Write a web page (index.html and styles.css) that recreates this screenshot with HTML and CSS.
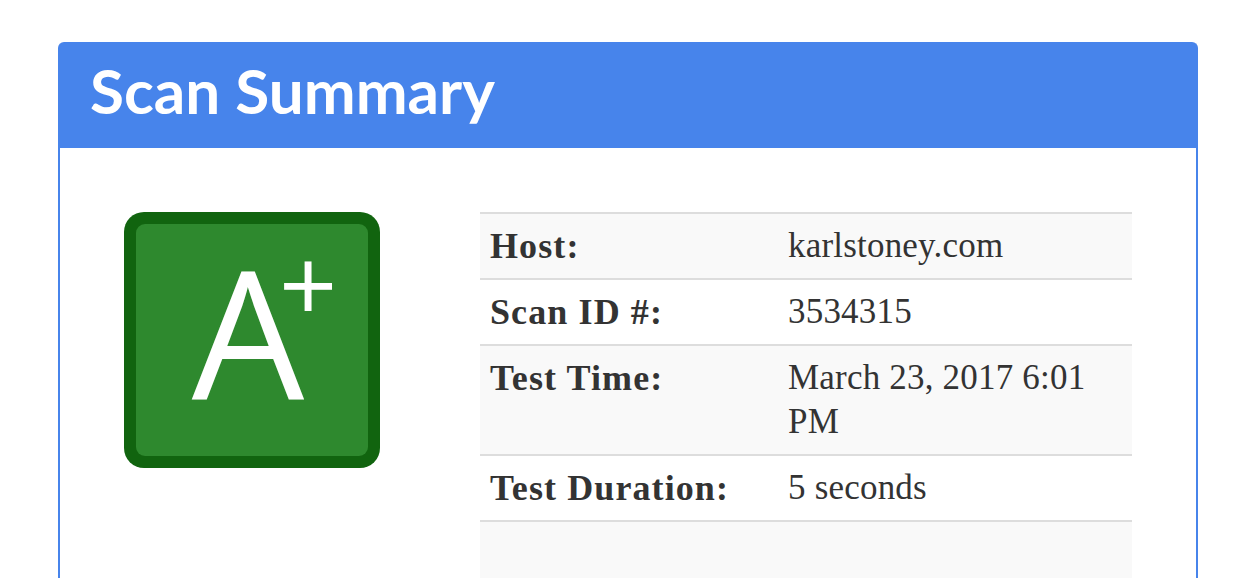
FILE: index.html
```html
<!DOCTYPE html>
<html lang="en">
<head>
<meta charset="utf-8">
<title>Scan Summary</title>
<link rel="stylesheet" href="styles.css">
</head>
<body>
<section class="panel">
  <header class="panel-heading">
    <h1 class="panel-title">Scan Summary</h1>
  </header>
  <div class="panel-body">
    <div class="grade">
      <div class="grade-inner">
        <span class="grade-letter">A</span>
        <span class="grade-mod">+</span>
      </div>
    </div>
    <table class="summary">
      <colgroup>
        <col class="col-label">
        <col class="col-value">
      </colgroup>
      <tbody>
        <tr><th>Host:</th><td>karlstoney.com</td></tr>
        <tr><th>Scan ID #:</th><td>3534315</td></tr>
        <tr><th>Test Time:</th><td>March 23, 2017 6:01 PM</td></tr>
        <tr><th>Test Duration:</th><td>5 seconds</td></tr>
        <tr class="empty"><th>&nbsp;</th><td>&nbsp;</td></tr>
      </tbody>
    </table>
  </div>
</section>
</body>
</html>
```

FILE: styles.css
```css
html, body {
  margin: 0;
  padding: 0;
  background: #ffffff;
  overflow: hidden;
}

body {
  height: 578px;
}

.panel {
  margin: 42px 44px 0 58px;
  border: 2px solid #4784eb;
  border-bottom: none;
  border-radius: 6px 6px 0 0;
  background: #ffffff;
}

.panel-heading {
  background: #4784eb;
  height: 104px;
  box-sizing: border-box;
  display: flex;
  align-items: center;
  padding: 0 0 12px 30px;
}

.panel-title {
  margin: 0;
  font-family: Lato, "Open Sans", sans-serif;
  font-weight: 700;
  font-size: 62px;
  line-height: 1;
  color: #ffffff;
}

.panel-body {
  display: flex;
  align-items: flex-start;
  gap: 100px;
  padding: 64px 64px 0 64px;
}

.grade {
  flex: 0 0 auto;
  width: 256px;
  height: 256px;
  box-sizing: border-box;
  background: #11640f;
  border-radius: 20px;
  padding: 12px;
}

.grade-inner {
  position: relative;
  width: 100%;
  height: 100%;
  background: #2e892e;
  border-radius: 9px;
  display: flex;
  align-items: center;
  justify-content: center;
}

.grade-letter {
  font-family: "Open Sans", sans-serif;
  font-weight: 400;
  font-size: 178px;
  line-height: 178px;
  color: #ffffff;
  margin: 0 8px 20px 0;
}

.grade-mod {
  position: absolute;
  left: 143px;
  top: 10px;
  font-family: "Open Sans", sans-serif;
  font-weight: 400;
  font-size: 102px;
  line-height: 100px;
  color: #ffffff;
}

.summary {
  flex: 0 0 auto;
  width: 652px;
  border-collapse: collapse;
  table-layout: fixed;
  font-family: "Liberation Serif", "Times New Roman", serif;
  font-size: 35px;
  line-height: 44px;
  color: #333333;
}

.col-label {
  width: 298px;
}

.summary th,
.summary td {
  padding: 10px;
  border-top: 2px solid #dddddd;
  text-align: left;
  vertical-align: top;
}

.summary th {
  font-weight: 700;
  font-size: 36px;
  letter-spacing: 1.1px;
}

.summary td {
  font-weight: 400;
  letter-spacing: 0.2px;
}

.summary tr:nth-child(odd) {
  background: #f9f9f9;
}

.summary tr.empty th,
.summary tr.empty td {
  height: 120px;
}
```
